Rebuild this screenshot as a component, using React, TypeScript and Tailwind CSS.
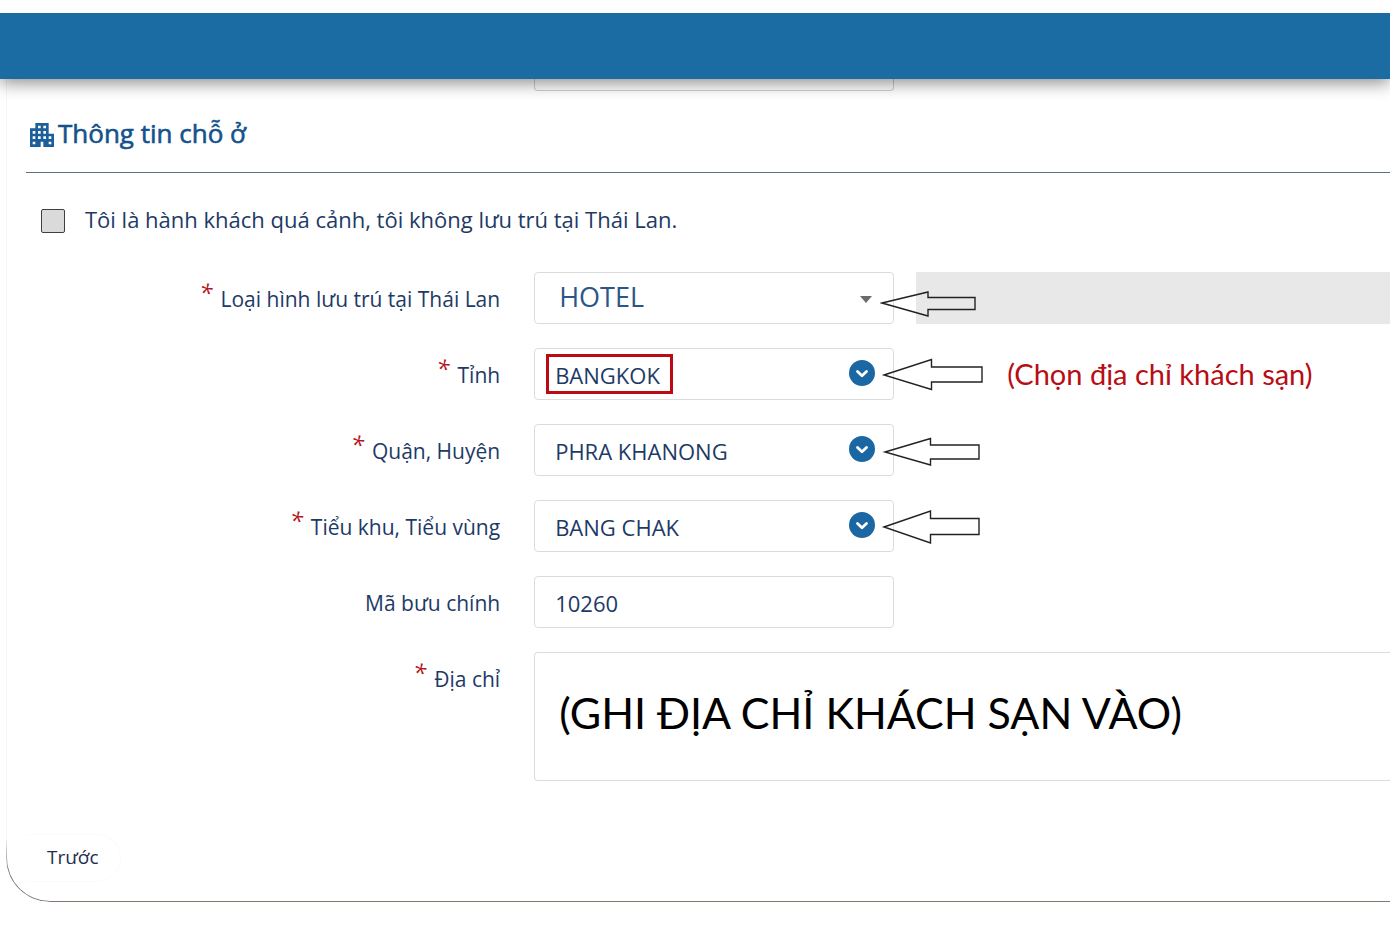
import { useState } from 'react';
import type { ReactNode } from 'react';
import { MdApartment } from 'react-icons/md';

const fieldBox =
  'h-[52px] w-full rounded border border-[#dcdcdc] bg-white px-5 pt-0.5 text-[22px] text-[#1d3a66] outline-none';

function Arrow({ points }: { points: string }) {
  return (
    <svg
      width="104"
      height="40"
      viewBox="0 0 104 40"
      className="pointer-events-none absolute top-2 left-[346px]"
      fill="none"
      stroke="#222222"
      strokeWidth="1.4"
      aria-hidden="true"
    >
      <polygon points={points} />
    </svg>
  );
}

function FormRow({
  id,
  label,
  required,
  children,
}: {
  id: string;
  label: string;
  required?: boolean;
  children: ReactNode;
}) {
  return (
    <div className="grid grid-cols-[19fr_32fr]">
      <label
        htmlFor={id}
        className="flex h-[52px] items-center justify-end gap-2 pr-[34px] pt-1 text-[21px] text-[#1d3a66]"
      >
        {required && (
          <span className="-mt-4 text-[24px] leading-none text-[#b5121b] italic">*</span>
        )}
        {label}
      </label>
      {children}
    </div>
  );
}

function ComboField({
  id,
  value,
  onChange,
  arrow,
  highlight,
}: {
  id: string;
  value: string;
  onChange: (value: string) => void;
  arrow: string;
  highlight?: boolean;
}) {
  return (
    <div className="relative w-[360px]">
      <input
        id={id}
        type="text"
        value={value}
        onChange={(e) => onChange(e.target.value)}
        className={fieldBox}
      />
      {highlight && (
        <span className="pointer-events-none absolute top-1.5 left-3 h-10 w-[127px] border-3 border-[#bd0a12]" />
      )}
      <button type="button" aria-label="Mở danh sách" className="absolute top-3 right-[19px]">
        <svg width="26" height="26" viewBox="0 0 26 26" fill="none">
          <circle cx="13" cy="13" r="13" fill="#1b67a3" />
          <path
            d="M8.5 11.5 13 15.7l4.5-4.2"
            stroke="#ffffff"
            strokeWidth="2.8"
            strokeLinecap="round"
            strokeLinejoin="round"
          />
        </svg>
      </button>
      <Arrow points={arrow} />
    </div>
  );
}

export default function App() {
  const [transit, setTransit] = useState(false);
  const [form, setForm] = useState({
    type: 'HOTEL',
    province: 'BANGKOK',
    district: 'PHRA KHANONG',
    subDistrict: 'BANG CHAK',
    postCode: '10260',
    address: '(GHI ĐỊA CHỈ KHÁCH SẠN VÀO)',
  });

  const update = (field: string, value: string) => setForm({ ...form, [field]: value });

  return (
    <div className="min-h-screen overflow-x-hidden bg-white pt-[13px] pb-6 font-['Open_Sans',sans-serif]">
      <header className="relative z-10 h-[66px] bg-[#1c6ca4] shadow-[0_4px_16px_rgba(0,0,0,0.45)] [clip-path:inset(0_0_-24px_0)]" />

      <main className="relative ml-1.5 rounded-bl-[44px] border-l border-[#f6f6f6] pb-5 pl-[19px]">
        {/* dark card edge, fades out up the left side */}
        <div className="pointer-events-none absolute inset-0 -left-px rounded-bl-[44px] border-b border-l border-[#85796f] [mask-image:linear-gradient(to_top,black_30px,transparent_64px)]" />

        {/* end of the previous section, under the header */}
        <div className="grid grid-cols-[19fr_32fr]">
          <div className="col-start-2 h-3 w-[360px] rounded-b border border-t-0 border-[#cfcfcf]" />
        </div>

        <h2 className="mt-5 flex h-[62px] border-b border-[#5f7083] pt-1 text-[26px] leading-9 font-medium text-[#15528c] [-webkit-text-stroke:0.6px_#15528c]">
          <MdApartment className="mt-1 size-8 text-[#1b5f9b]" />
          Thông tin chỗ ở
        </h2>

        <label className="mt-8 ml-[15px] flex h-8 items-center gap-5 text-[22px] text-[#1d3a66]">
          <input
            type="checkbox"
            checked={transit}
            onChange={(e) => setTransit(e.target.checked)}
            className="size-6 appearance-none rounded-xs border border-[#3f3f3f] bg-[#dadada]"
          />
          <span className="pb-1">Tôi là hành khách quá cảnh, tôi không lưu trú tại Thái Lan.</span>
        </label>

        <form className="mt-[35px] flex flex-col gap-6">
          <FormRow id="type" label="Loại hình lưu trú tại Thái Lan" required>
            <div className="flex gap-[22px]">
              <div className="relative w-[360px] shrink-0">
                <select
                  id="type"
                  value={form.type}
                  onChange={(e) => update('type', e.target.value)}
                  className="h-[52px] w-full appearance-none rounded border border-[#dcdcdc] bg-white px-6 pb-0.5 text-[27px] text-[#2b5688] outline-none"
                >
                  <option value="HOTEL">HOTEL</option>
                </select>
                <svg
                  width="12"
                  height="7"
                  viewBox="0 0 12 7"
                  className="pointer-events-none absolute top-6 right-[22px]"
                  aria-hidden="true"
                >
                  <path d="M0 0h12L6 7z" fill="#6b6b6b" />
                </svg>
                <Arrow points="2,23 48,12 48,17.5 95,17.5 95,29.5 48,29.5 48,36" />
              </div>
              <div className="h-[52px] flex-1 bg-[#e8e8e8]" />
            </div>
          </FormRow>

          <FormRow id="province" label="Tỉnh" required>
            <div className="flex items-center gap-[113px]">
              <ComboField
                id="province"
                value={form.province}
                onChange={(value) => update('province', value)}
                arrow="4,19 51.5,3.5 51.5,11 102,11 102,26 51.5,26 51.5,33.5"
                highlight
              />
              <p className="font-['Lato',sans-serif] text-[29px] leading-9 whitespace-nowrap text-[#b80d14]">
                (Chọn địa chỉ khách sạn)
              </p>
            </div>
          </FormRow>

          <FormRow id="district" label="Quận, Huyện" required>
            <ComboField
              id="district"
              value={form.district}
              onChange={(value) => update('district', value)}
              arrow="5,20 50.5,6.5 50.5,13 99,13 99,27 50.5,27 50.5,33"
            />
          </FormRow>

          <FormRow id="subDistrict" label="Tiểu khu, Tiểu vùng" required>
            <ComboField
              id="subDistrict"
              value={form.subDistrict}
              onChange={(value) => update('subDistrict', value)}
              arrow="4,19 50.5,3 50.5,10.5 99,10.5 99,26.5 50.5,26.5 50.5,35"
            />
          </FormRow>

          <FormRow id="postCode" label="Mã bưu chính">
            <div className="w-[360px]">
              <input
                id="postCode"
                type="text"
                value={form.postCode}
                onChange={(e) => update('postCode', e.target.value)}
                className={fieldBox}
              />
            </div>
          </FormRow>

          <FormRow id="address" label="Địa chỉ" required>
            <textarea
              id="address"
              value={form.address}
              onChange={(e) => update('address', e.target.value)}
              className="block h-[129px] w-full resize-none rounded-l border border-r-0 border-[#dcdcdc] px-6 pt-7 font-['Lato',sans-serif] text-[43px] leading-[64px] text-black outline-none"
            />
          </FormRow>
        </form>

        <button
          type="button"
          className="mt-[53px] h-12 rounded-r-3xl border border-l-0 border-[#fbfbfb] px-[21px] pb-0.5 text-[19px] text-[#1f2f4f]"
        >
          Trước
        </button>
      </main>
    </div>
  );
}
